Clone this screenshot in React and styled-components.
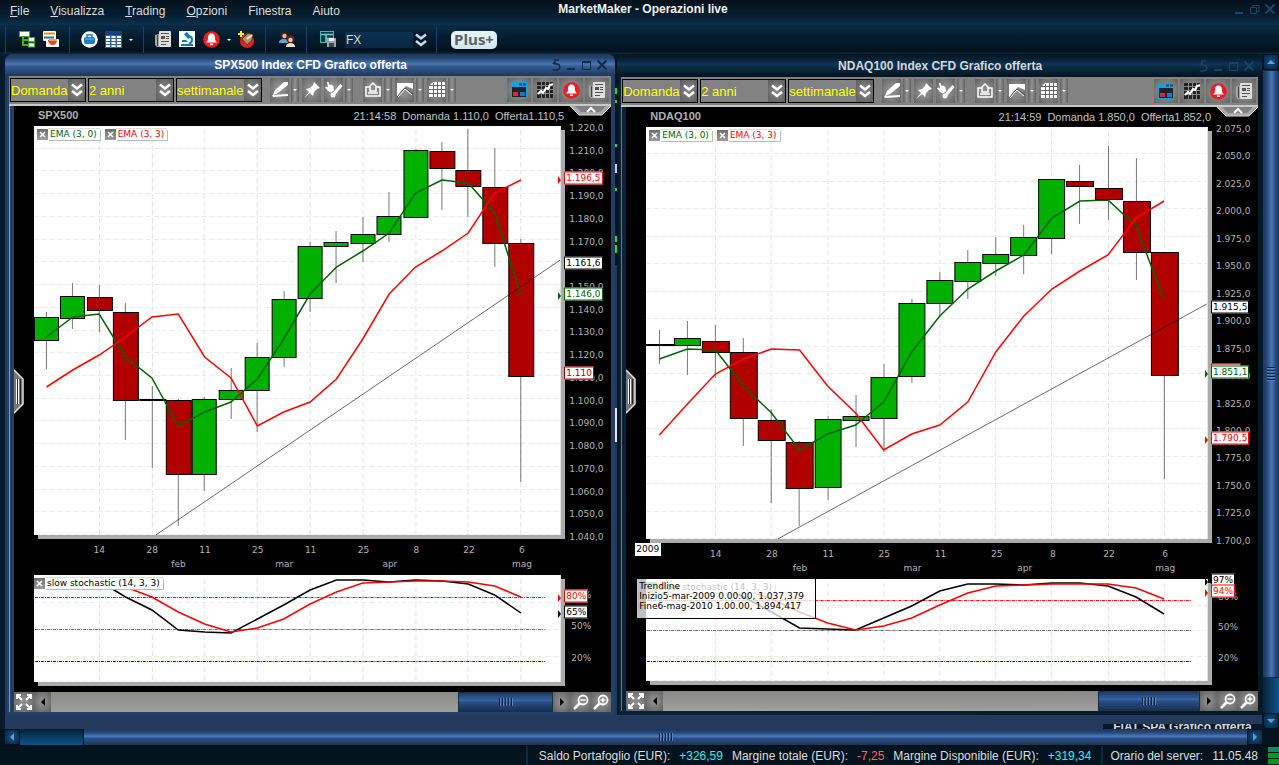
import React from "react";
import styled, { createGlobalStyle } from "styled-components";

const Colors = {
  night: "#04141f",
  desk: "#243a5c",
  gray: "#828282",
  axis: "#b4b4b4",
  green: "#00b000",
  darkGreen: "#006400",
  red: "#ff0000",
  darkRed: "#b00000",
};

const GlobalStyle = createGlobalStyle`
  * {
    box-sizing: border-box;
  }
  body {
    margin: 0;
    background: ${Colors.night};
    font-family: "Liberation Sans", Arial, sans-serif;
    font-size: 12px;
  }
  button {
    border: 0;
    padding: 0;
    background: none;
    font: inherit;
    color: inherit;
  }
  ul {
    list-style: none;
    margin: 0;
    padding: 0;
  }
  svg {
    display: block;
  }
`;

const Page = styled.div`
  min-height: 100vh;
  display: flex;
  flex-direction: column;
`;

/* ---------- application header ---------- */

const MenuBar = styled.header`
  height: 27px;
  flex: none;
  display: grid;
  grid-template-columns: 1fr auto 1fr;
  padding: 0 3px 0 10px;
  color: #dcdcdc;
  background: linear-gradient(#03111b, #061c2d 50%, #0b2f4c 92%, #08243a);
`;

const Menu = styled.nav`
  display: flex;
  align-items: flex-start;
  gap: 21px;
`;

const MenuItem = styled.button`
  line-height: 22px;

  &::first-letter {
    text-decoration: ${(p) => (p.$plain ? "none" : "underline")};
  }
`;

const AppTitle = styled.h1`
  margin: 0;
  font-size: 12px;
  line-height: 18px;
  color: #f0f0f0;
`;

const AppControls = styled.div`
  display: flex;
  justify-content: flex-end;
  align-items: flex-start;
  padding-top: 3px;
  gap: 4px;
  color: #1c4766;
`;

const MainToolbar = styled.div`
  height: 27px;
  flex: none;
  display: flex;
  align-items: center;
  padding: 0 5px 2px;
  background: linear-gradient(#0a2a44, #061d2f 35%, #03121d 90%, #0f2a45);
`;

const ToolSection = styled.div`
  height: 27px;
  display: flex;
  align-items: center;
  gap: 7px;
  padding: 0 ${(p) => p.$right || 10}px 0 ${(p) => p.$left || 11}px;
  border-left: 1px solid #12406a;
`;

const IconButton = styled.button`
  display: flex;
  width: 17px;
  height: 17px;
  align-items: center;
  justify-content: center;
`;

const Caret = styled.span`
  border: 2px solid transparent;
  border-top-color: #fff;
  border-bottom: 0;
`;

const LayoutSelect = styled.label`
  display: flex;
  align-items: center;
  gap: 2px;
  margin-left: 1px;
  background: #061a2b;
  color: #d8d8c8;

  select {
    appearance: none;
    border: 0;
    padding: 0 1px;
    width: 68px;
    height: 16px;
    font: 12px "Liberation Sans", Arial, sans-serif;
    color: inherit;
    background: linear-gradient(#0b3252, #082640);
  }
`;

const PlusButton = styled.button`
  width: 46px;
  height: 18px;
  border-radius: 5px;
  font: bold 15px/17px "Open Sans", "Noto Sans", sans-serif;
  color: #5c6164;
  background: linear-gradient(#e8f4f8, #cfe7ef);
`;

/* ---------- desktop ---------- */

const Desktop = styled.main`
  flex: 1;
  display: flex;
  padding-left: 5px;
  background: #071a2b;
`;

const DeskMain = styled.div`
  flex: 1;
  min-width: 0;
  display: flex;
  flex-direction: column;
  padding-right: 1px;
`;

const WindowRow = styled.div`
  flex: 1;
  display: flex;
`;

const Sliver = styled.div`
  width: 2px;
  flex: none;
  background: linear-gradient(
    #06141f 34px, #1fe01f 34px 40px, #06141f 40px 46px, #1fe01f 46px 49px,
    #06141f 49px 90px, #1fe01f 90px 93px, #06141f 93px 110px, #ccc 110px 119px,
    #06141f 119px 134px, #1fe01f 134px 137px, #06141f 137px 182px,
    #1fe01f 182px 188px, #06141f 188px 191px, #1fe01f 191px 199px,
    #06141f 199px 211px, #203858 211px 354px, #e6e6e6 354px 388px, #203858 388px
  );
`;

const DeskStrip = styled.div`
  height: 14px;
  flex: none;
  display: flex;
  justify-content: flex-end;
  align-items: flex-end;
  background: ${Colors.desk};
`;

const HiddenTitle = styled.div`
  width: 159px;
  height: 5px;
  overflow: hidden;
  text-align: center;
  font-weight: bold;
  line-height: 7px;
  color: #d6d6d6;
  background: #06182a;
`;

const frameTheme = {
  active: {
    title: "linear-gradient(#1b365a, #27476f 20%, #4a76b6 46%, #365c92 56%, #1d3658)",
    frame: "linear-gradient(90deg, #1c3456, #243f66 3px, #243f66)",
    line: "#8f98a6",
    control: "#122a4a",
  },
  idle: {
    title: "linear-gradient(#04141f, #07202f 20%, #0d3353 46%, #0a2840 60%, #04141f)",
    frame: "linear-gradient(90deg, #04121d, #0a2238 3px, #061826)",
    line: "#6f7780",
    control: "#164466",
  },
};

const Frame = styled.section`
  flex: ${(p) => p.$grow} 1 0;
  min-width: 0;
  display: flex;
  flex-direction: column;
  padding: 0 4px ${(p) => (p.$tone === "active" ? 3 : 4)}px;
  border-radius: 8px 8px 0 0;
  background: ${(p) => frameTheme[p.$tone].frame};
`;

const TitleBar = styled.div`
  height: ${(p) => (p.$tone === "active" ? 22 : 23)}px;
  margin: 0 -4px;
  padding: 0 7px 0 8px;
  flex: none;
  display: grid;
  grid-template-columns: 1fr auto 1fr;
  align-items: center;
  border-radius: 8px 8px 0 0;
  background: ${(p) => frameTheme[p.$tone].title};
  color: ${(p) => frameTheme[p.$tone].control};
`;

const WindowTitle = styled.h2`
  grid-column: 2;
  margin: 0;
  font-size: 12px;
  line-height: 22px;
  color: ${(p) => (p.$tone === "active" ? "#fff" : "#d2d8dc")};
`;

const WindowControls = styled.div`
  display: flex;
  justify-content: flex-end;
  gap: 4px;
`;

const ChartToolbar = styled.div`
  height: 30px;
  flex: none;
  display: flex;
  align-items: center;
  gap: 2px;
  padding: 0 2px 0 1px;
  border-bottom: 2px solid #c8c8c8;
  background: ${Colors.gray};
`;

const ComboBox = styled.label`
  position: relative;
  width: ${(p) => p.$width}px;
  height: 24px;
  flex: none;
  display: flex;
  border: 1px solid #000;

  select {
    appearance: none;
    width: 100%;
    border: 0;
    padding: 0;
    font: 13px "Liberation Sans", Arial, sans-serif;
    color: #ffff00;
    background: ${Colors.gray};
  }
`;

const ComboArrow = styled.span`
  position: absolute;
  top: 0;
  right: 0;
  bottom: 0;
  width: 17px;
  display: flex;
  align-items: center;
  justify-content: center;
  background: radial-gradient(#8a8a8a, #5c5c5c);
  pointer-events: none;
`;

const ToolGroup = styled.div`
  display: flex;
  gap: 3px;
  margin-left: ${(p) => p.$space}px;
`;

const ToolButton = styled.button`
  width: ${(p) => (p.$wide ? 24 : 19)}px;
  height: 24px;
  display: flex;
  align-items: center;
  justify-content: center;
  background: radial-gradient(#8c8c8c 30%, #626262);
`;

const ToolSplit = styled.div`
  display: flex;
  gap: 2px;
`;

const ToolDrop = styled.button`
  width: 8px;
  height: 24px;
  display: flex;
  align-items: center;
  justify-content: center;
  background: linear-gradient(90deg, #626262, #929292, #626262);
`;

const RightTools = styled.div`
  display: flex;
  gap: 2px;
  margin-left: auto;
`;

/* ---------- chart body ---------- */

const Body = styled.div`
  position: relative;
  flex: 1;
  display: flex;
  flex-direction: column;
  border-left: 1px solid ${(p) => frameTheme[p.$tone].line};
  padding-left: 4px;
`;

const ChartArea = styled.div`
  position: relative;
  flex: 1;
  display: flex;
  flex-direction: column;
  padding-bottom: 10px;
  background: #000;
`;

const QuoteLine = styled.div`
  height: 20px;
  flex: none;
  display: flex;
  gap: 6px;
  padding: 0 47px 0 24px;
  font-size: 11px;
  line-height: 21px;
  color: #c0c0c0;

  strong {
    margin-right: auto;
    line-height: 19px;
    color: #b0b0b0;
  }
`;

const CollapseTab = styled.button`
  position: absolute;
  top: 0;
  right: 0;
`;

const SideHandle = styled.button`
  position: absolute;
  left: 0;
  top: calc(50% - 30px);
`;

const ChartRow = styled.div`
  flex: ${(p) => p.$grow} 1 0;
  min-height: 60px;
  display: grid;
  grid-template-columns: 20px 1fr 50px;
`;

const Plot = styled.div`
  grid-column: 2;
  position: relative;
  background: #fff;
  border-right: 1px solid #e4e4e4;
  box-shadow: 4px 4px 0 #ababab;

  > svg {
    position: absolute;
    inset: 0;
    width: 100%;
    height: 100%;
  }
`;

const Axis = styled.div`
  position: relative;
  z-index: 1;
  font: 9px "DejaVu Sans", sans-serif;
  color: ${Colors.axis};
`;

const PriceScale = styled.ul`
  height: calc(100% + 2px);
  padding: 2px 0 0 8px;
  display: flex;
  flex-direction: column;
  justify-content: space-between;

  li {
    height: 0;
    line-height: 0;
  }
`;

const PercentMark = styled.span`
  position: absolute;
  left: 10px;
  line-height: 10px;
  transform: translateY(-50%);
`;

const Tag = styled.span`
  position: absolute;
  left: 3px;
  height: 13px;
  padding: 0 1px;
  border: 1px solid ${(p) => p.$color};
  background: #fff;
  line-height: 11px;
  color: ${(p) => p.$color};
  transform: translateY(-50%);
`;

const Pointer = styled.span`
  position: absolute;
  left: -3px;
  border: 4px solid transparent;
  border-left: 3px solid ${(p) => p.$color};
  border-right: 0;
  transform: translateY(-2px);
`;

const Legend = styled.div`
  position: absolute;
  top: 3px;
  left: ${(p) => p.$left}px;
  display: flex;
  gap: 5px;
  font: 9px/11px "DejaVu Sans", sans-serif;
`;

const LegendItem = styled.span`
  display: flex;
  color: ${(p) => p.$color};
`;

const LegendText = styled.span`
  height: 11px;
  padding: 0 3px 0 2px;
  background: #fff;
  box-shadow: 1px 1px 0 #bbb, 0 -1px 0 #ddd;
`;

const CloseBox = styled.button`
  width: 11px;
  height: 11px;
  background: linear-gradient(#6e6e6e, #9c9c9c);
`;

const DateScale = styled.div`
  position: relative;
  height: 40px;
  flex: none;
  margin: 0 50px 0 20px;
  font: 9px/10px "DejaVu Sans", sans-serif;
  color: ${Colors.axis};
`;

const DateMark = styled.span`
  position: absolute;
  top: ${(p) => (p.$month ? 24 : 10)}px;
  transform: translateX(-50%);
`;

const YearTag = styled.span`
  position: absolute;
  left: -11px;
  top: 4px;
  padding: 0 2px 0 1px;
  line-height: 13px;
  background: #fff;
  color: #000;
`;

const TrendNote = styled.div`
  position: absolute;
  left: -9px;
  top: 0;
  padding: 2px 11px 7px 2px;
  border: solid #000;
  border-width: 0 1px 1px 0;
  background: rgba(255, 255, 255, 0.75);
  color: #000;
  font: 9px/10px "DejaVu Sans", sans-serif;
  white-space: nowrap;
`;

const PanBar = styled.div`
  height: 20px;
  flex: none;
  display: flex;
  background: #767676;
`;

const PanButton = styled.button`
  width: ${(p) => p.$width}px;
  display: flex;
  align-items: center;
  justify-content: center;
  background: radial-gradient(#8c8c8c 20%, #5e5e5e);
`;

const PanTrack = styled.div`
  flex: 1;
  display: flex;
  justify-content: flex-end;
  background: linear-gradient(#888, #9f9f9b);
`;

const PanThumb = styled.div`
  width: 19%;
  display: flex;
  align-items: center;
  justify-content: center;
  border: 1px solid #16304f;
  background: linear-gradient(#1c3b66, #3763a4 42%, #2b5088 50%, #16304f);
`;

/* ---------- scroll bars and status ---------- */

const Grip = styled.span`
  width: ${(p) => (p.$vertical ? 8 : 14)}px;
  height: ${(p) => (p.$vertical ? 14 : 8)}px;
  background: repeating-linear-gradient(
    ${(p) => (p.$vertical ? "180deg" : "90deg")},
    #0e2340 0 1px,
    #5683c4 1px 2px,
    transparent 2px 3px
  );
`;

const VerticalScroll = styled.div`
  width: 16px;
  flex: none;
  display: flex;
  flex-direction: column;
  background: linear-gradient(90deg, #06213a, #105488);
`;

const VerticalThumb = styled.div`
  flex: 1;
  display: flex;
  align-items: center;
  justify-content: center;
  margin-bottom: 35px;
  border: solid #122a48;
  border-width: 1px 0;
  background: linear-gradient(90deg, #1c3558, #284b7c 25%, #4a78ba 55%, #2b4f82 75%, #1c3558);
`;

const ScrollArrow = styled.button`
  width: 16px;
  height: 16px;
  flex: none;
  display: flex;
  align-items: center;
  justify-content: center;
  border: 1px solid #051421;
  background: radial-gradient(#17507f, #07233c);
`;

const HorizontalScroll = styled.div`
  height: 17px;
  flex: none;
  display: flex;
  padding: 0 16px 0 4px;
  border-bottom: 1px solid #020c14;
  background: #04141f;
`;

const ScrollTrack = styled.div`
  flex: 1;
  display: flex;
  padding-left: 63px;
  background: linear-gradient(#052036, #0e5388);
`;

const HorizontalThumb = styled.div`
  flex: 1;
  display: flex;
  align-items: center;
  justify-content: center;
  border-left: 1px solid #051421;
  background: linear-gradient(#1c3558, #284b7c 25%, #4a78ba 45%, #2b4f82 60%, #1c3558);
`;

const StatusBar = styled.footer`
  height: 19px;
  flex: none;
  display: flex;
  justify-content: flex-end;
  line-height: 20px;
  color: #dcdcdc;
  background: #04141f;
`;

const StatusGroup = styled.div`
  display: flex;
  gap: 9px;
  padding: 0 ${(p) => p.$right}px 0 ${(p) => p.$left}px;
  border-left: 2px solid #0e2a42;
`;

const Amount = styled.span`
  color: ${(p) => (p.$loss ? "#ff6464" : "#28f0f0")};
`;

const SignalBars = styled.div`
  width: 11px;
  display: flex;
  flex-direction: column;
  gap: 1px;
  padding-top: 1px;

  span {
    height: 5px;
    background: #0a9a1a;
  }
  span:first-child {
    background: #0c8c5c;
  }
`;

/* ---------- data ---------- */

// each bar: direction, body top, body bottom, high, low
const spx = {
  title: "SPX500 Index CFD Grafico offerta",
  symbol: "SPX500",
  time: "21:14:58",
  bid: "Domanda 1.110,0",
  ask: "Offerta1.110,5",
  tone: "active",
  grow: 610,
  width: 527,
  height: 409,
  lower: 107,
  start: 12.5,
  step: 26.4,
  prices: [
    "1.220,0", "1.210,0", "1.200,0", "1.190,0", "1.180,0", "1.170,0", "1.160,0",
    "1.150,0", "1.140,0", "1.130,0", "1.120,0", "1.110,0", "1.100,0", "1.090,0",
    "1.080,0", "1.070,0", "1.060,0", "1.050,0", "1.040,0",
  ],
  bars: [
    ["up", 191, 214, 186, 243], ["up", 170, 192, 157, 203], ["down", 171, 184, 159, 206],
    ["down", 186, 274, 177, 314], ["flat", 274, 274, 260, 342], ["down", 274, 348, 273, 400],
    ["up", 273, 348, 271, 365], ["up", 264, 273, 242, 293], ["up", 231, 264, 217, 306],
    ["up", 173, 231, 165, 241], ["up", 120, 172, 116, 186], ["up", 116, 120, 105, 157],
    ["up", 108, 117, 91, 136], ["up", 90, 108, 66, 116], ["up", 24, 91, 23, 91],
    ["down", 25, 42, 16, 84], ["down", 44, 60, 3, 91], ["down", 61, 117, 22, 141],
    ["down", 117, 250, 113, 356],
  ],
  ema: [211, 191, 188, 231, 252, 300, 286, 276, 253, 213, 168, 141, 125, 107, 67, 54, 57, 87, 169],
  emaLead: [261, 244, 229],
  trend: [122, 409, 527, 134],
  tags: [
    { text: "1.196,5", y: 52, color: Colors.red, pointer: true },
    { text: "1.161,6", y: 137, color: "#000" },
    { text: "1.146,0", y: 168, color: Colors.darkGreen, pointer: true },
    { text: "1.110", y: 247, color: Colors.darkRed },
  ],
  levels: [22, 54, 86],
  fast: [6, 22, 35, 55, 57, 58, 44, 30, 15, 5, 5, 7, 5, 6, 9, 20, 38],
  slow: [6, 12, 22, 37, 49, 57, 53, 44, 29, 17, 8, 7, 6, 6, 7, 11, 22],
  percents: [["80%", 20], ["50%", 51], ["20%", 83]],
  lowerTags: [
    { text: "80%", y: 21, color: Colors.red, pointer: true },
    { text: "65%", y: 37, color: "#000", pointer: true },
  ],
};

const ndaq = {
  title: "NDAQ100 Index CFD Grafico offerta",
  symbol: "NDAQ100",
  time: "21:14:59",
  bid: "Domanda 1.850,0",
  ask: "Offerta1.852,0",
  tone: "idle",
  grow: 645,
  width: 562,
  height: 412,
  lower: 102,
  start: 13.4,
  step: 28.1,
  prices: [
    "2.075,0", "2.050,0", "2.025,0", "2.000,0", "1.975,0", "1.950,0", "1.925,0",
    "1.900,0", "1.875,0", "1.850,0", "1.825,0", "1.800,0", "1.775,0", "1.750,0",
    "1.725,0", "1.700,0",
  ],
  bars: [
    ["flat", 218, 218, 203, 237], ["up", 211, 218, 194, 248], ["down", 214, 225, 198, 251],
    ["down", 225, 291, 211, 319], ["down", 293, 313, 282, 376], ["down", 315, 361, 314, 399],
    ["up", 292, 360, 289, 373], ["up", 289, 293, 268, 320], ["up", 250, 291, 237, 325],
    ["up", 176, 249, 172, 256], ["up", 153, 176, 145, 190], ["up", 135, 154, 123, 172],
    ["up", 127, 136, 110, 149], ["up", 110, 128, 98, 147], ["up", 52, 111, 52, 127],
    ["down", 54, 59, 38, 97], ["down", 61, 72, 19, 93], ["down", 74, 125, 31, 153],
    ["down", 125, 248, 125, 352],
  ],
  ema: [232, 222, 223, 259, 286, 323, 307, 298, 275, 225, 189, 162, 144, 128, 91, 74, 73, 99, 173],
  emaLead: [308, 277, 247],
  trend: [132, 412, 562, 177],
  tags: [
    { text: "1.915,5", y: 180, color: "#000" },
    { text: "1.850", y: 243, color: Colors.darkRed },
    { text: "1.851,1", y: 245, color: Colors.darkGreen, pointer: true },
    { text: "1.790,5", y: 311, color: Colors.red, pointer: true },
  ],
  levels: [21, 51, 82],
  fast: [4, 18, 33, 49, 50, 51, 39, 27, 12, 5, 5, 6, 4, 4, 7, 18, 35],
  slow: [4, 10, 20, 33, 44, 51, 47, 39, 26, 14, 7, 6, 5, 5, 5, 9, 20],
  percents: [["80%", 18], ["50%", 48], ["20%", 79]],
  lowerTags: [
    { text: "97%", y: 1, color: "#000", pointer: true },
    { text: "94%", y: 12, color: Colors.red, pointer: true },
  ],
  year: "2009",
  note: [
    "Trendline",
    "Inizio5-mar-2009 0.00.00, 1.037,379",
    "Fine6-mag-2010 1.00.00, 1.894,417",
  ],
};

const days = [[2, "14"], [4, "28"], [6, "11"], [8, "25"], [10, "11"], [12, "25"], [14, "8"], [16, "22"], [18, "6"]];
const months = [[5, "feb"], [9, "mar"], [13, "apr"], [18, "mag"]];

/* ---------- icons ---------- */

const TreeIcon = () => (
  <svg width="17" height="17" viewBox="0 0 17 17">
    <path d="M4 5v9h6M4 9h6" fill="none" stroke="#3fae2a" strokeWidth="2" />
    <rect x="0.500" y="0.500" width="10" height="5" fill="#fff" stroke="#3fae2a" />
    <rect x="9.500" y="6.500" width="6" height="4" fill="#fff" stroke="#3fae2a" />
    <rect x="9.500" y="12" width="6" height="4" fill="#fff" stroke="#3fae2a" />
  </svg>
);

const CardsIcon = () => (
  <svg width="17" height="17" viewBox="0 0 17 17">
    <rect width="13" height="10" rx="1" fill="#fff" />
    <path d="M1 2.500h11" stroke="#f39200" strokeWidth="2" />
    <path d="M1 6.500h10" stroke="#1b75bb" strokeWidth="2" />
    <rect x="3" y="8" width="13" height="8" rx="1" fill="#fff" />
    <path d="M5 9h9c0 3-2 5-4 5s-5-2-5-5z" fill="#e8412c" />
    <path d="M6 8h8v2H6z" fill="#f5a623" />
  </svg>
);

const BagIcon = () => (
  <svg width="17" height="17" viewBox="0 0 17 17">
    <circle cx="8.500" cy="8.500" r="8.300" fill="#fff" />
    <path d="M6 6V4h5v2" fill="none" stroke="#0c86c8" strokeWidth="1.500" />
    <rect x="3" y="6" width="11" height="7" rx="2" fill="#0c86c8" />
    <path d="M4.500 8h8" stroke="#6fc0e8" />
  </svg>
);

const CalendarIcon = () => (
  <svg width="17" height="17" viewBox="0 0 17 17">
    <rect width="17" height="17" fill="#2c62b0" />
    <rect y="0" width="17" height="4" fill="#153f86" />
    <path
      d="M1 6h4M6.500 6h4M12 6h4M1 9h4M6.500 9h4M12 9h4M1 12h4M6.500 12h4M12 12h4M1 15h4M6.500 15h4M12 15h4"
      stroke="#fff"
      strokeWidth="2"
    />
  </svg>
);

const NewsIcon = () => (
  <svg width="17" height="17" viewBox="0 0 17 17">
    <path d="M0 4l4-1v13H2L0 14z" fill="#a4a4a4" />
    <rect x="4" y="0" width="12" height="16" rx="1" fill="#dedede" />
    <path d="M6 2.500h8M11 5.500h3M11 7.500h3M6 10.500h8M6 13.500h5" stroke="#555" />
    <rect x="6" y="5" width="4" height="3" fill="#555" />
    <path d="M2.500 4v11" stroke="#444" />
  </svg>
);

const MicroscopeIcon = () => (
  <svg width="17" height="17" viewBox="0 0 17 17">
    <rect width="16" height="16" fill="#fff" />
    <path d="M5 3l3-2 4 5-3 2zM7 9H3v2h6zM2 13h12v2H2z" fill="#0c79bd" />
    <path d="M10 5c4 1 4 6 0 8" fill="none" stroke="#0c79bd" strokeWidth="2" />
  </svg>
);

const BellIcon = () => (
  <svg width="17" height="17" viewBox="0 0 17 17">
    <circle cx="8.500" cy="8.500" r="8.300" fill="#ee1c24" />
    <path d="M8.500 2.500c-3 0-3.500 2.500-3.500 5 0 2-1 3-2 4h11c-1-1-2-2-2-4 0-2.500-.5-5-3.500-5zM7 12.500h3v1.500H7z" fill="#fff" />
  </svg>
);

const AlertTagIcon = () => (
  <svg width="17" height="17" viewBox="0 0 17 17">
    <circle cx="9" cy="10" r="7" fill="#e0202a" />
    <path d="M4 8l6-6 5 2-1 5-5 5z" fill="#b98a62" stroke="#5c3a20" />
    <path d="M9 8l5-4" stroke="#f4e2cc" strokeWidth="2" />
    <path d="M3 0v6M0 3h6" stroke="#ffee00" strokeWidth="2" />
  </svg>
);

const PeopleIcon = () => (
  <svg width="17" height="17" viewBox="0 0 17 17">
    <circle cx="5" cy="4" r="3.500" fill="#3a2418" />
    <circle cx="5.500" cy="5" r="2.200" fill="#e9b890" />
    <path d="M0 12c0-3 2-4 5-4s4 1 4 4z" fill="#5ea4dc" />
    <circle cx="11.500" cy="8" r="3.800" fill="#6a1f12" />
    <circle cx="11.500" cy="9" r="2.200" fill="#f2c8a4" />
    <path d="M7 16c0-3 2-4 4.500-4s4.500 1 4.500 4z" fill="#f6e0d0" />
  </svg>
);

const SaveLayoutIcon = () => (
  <svg width="17" height="17" viewBox="0 0 17 17">
    <rect x="0.500" y="0.500" width="13" height="11" fill="#0b3a44" stroke="#3fb6bc" />
    <path d="M1 3.500h12M6 4v7M6 7.500h7" stroke="#6fd0d4" strokeWidth="1.500" />
    <rect x="7" y="7" width="9" height="9" fill="#9da3a8" />
    <path d="M9 7h5v3H9z" fill="#eee" />
    <path d="M9 12h5v4H9z" fill="#444" />
  </svg>
);

const DoubleChevron = ({ color = "#fff" }) => (
  <svg width="12" height="14" viewBox="0 0 12 14">
    <path d="M1 1.500l5 4 5-4M1 8l5 4 5-4" fill="none" stroke={color} strokeWidth="2.500" />
  </svg>
);

const MinimizeIcon = () => (
  <svg width="11" height="12" viewBox="0 0 11 12">
    <path d="M1 10h8" stroke="currentColor" strokeWidth="2" />
  </svg>
);

const MaximizeIcon = () => (
  <svg width="11" height="12" viewBox="0 0 11 12">
    <path d="M1.500 2.500h8v8h-8z" fill="none" stroke="currentColor" />
    <path d="M1 3h9" stroke="currentColor" strokeWidth="2" />
  </svg>
);

const RestoreIcon = () => (
  <svg width="11" height="12" viewBox="0 0 11 12">
    <path d="M1.500 4.500h6v6h-6zM4 2.500h6v6H8M4 2v2" fill="none" stroke="currentColor" />
  </svg>
);

const CloseIcon = () => (
  <svg width="12" height="12" viewBox="0 0 12 12">
    <path d="M1.500 1.500l9 9M10.500 1.500l-9 9" stroke="currentColor" strokeWidth="2" />
  </svg>
);

const DetachIcon = () => (
  <svg width="10" height="12" viewBox="0 0 10 12">
    <path d="M7 1H3v4h2c4 0 4 6-1 6H1M1 5l2-3" fill="none" stroke="currentColor" strokeWidth="1.500" />
  </svg>
);

const PenIcon = () => (
  <svg width="18" height="18" viewBox="0 0 18 18">
    <path d="M13 1h4v3L7 12l-5 2 2-5zM1 14l16-1v2l-15 1z" fill="#fff" />
  </svg>
);

const PinIcon = () => (
  <svg width="18" height="18" viewBox="0 0 18 18">
    <path d="M11 1l6 6-3 1-3 3-1 4-3-3-6 5 5-6-3-3 4-1 3-3z" fill="#fff" />
  </svg>
);

const HandIcon = () => (
  <svg width="19" height="18" viewBox="0 0 19 18">
    <path d="M3 1l1.500 0 1 3 2-.5 2 2 .5 4-3 2-3-1.500L1 6.500l1-1 2 1z" fill="#fff" />
    <path d="M17.500 4L9 14" fill="none" stroke="#fff" strokeWidth="3" />
    <circle cx="9" cy="14" r="2.500" fill="#fff" />
  </svg>
);

const ClipIcon = () => (
  <svg width="18" height="18" viewBox="0 0 18 18">
    <path d="M6 6H2v9h14V6h-4" fill="none" stroke="#fff" strokeWidth="1.500" />
    <path d="M6 10V5l3-3 3 3v5z" fill="none" stroke="#fff" strokeWidth="1.500" />
    <path d="M4 12h10" stroke="#fff" strokeWidth="1.500" />
  </svg>
);

const PeakIcon = () => (
  <svg width="18" height="18" viewBox="0 0 18 18">
    <path d="M1 2h16v6l-7-3L5 10l-4 6z" fill="#fff" />
    <path d="M1 16l8-9 8 6" fill="none" stroke="#444" />
    <path d="M2 16l7-8 7 6" fill="none" stroke="#fff" />
  </svg>
);

const GridIcon = () => (
  <svg width="18" height="18" viewBox="0 0 18 18">
    <path d="M5 1h12v15H1V5z" fill="#fff" />
    <path d="M1 4.500h16M1 8.500h16M1 12.500h16M5.500 2v14M9.500 1v15M13.500 1v15" stroke="#666" />
  </svg>
);

const DealIcon = () => (
  <svg width="18" height="18" viewBox="0 0 18 18">
    <rect x="1" y="1" width="16" height="16" fill="#16a0dc" />
    <rect x="2" y="6" width="14" height="10" fill="#222" />
    <path d="M9 3.500h3M13 3.500h3" stroke="#0b4a78" strokeWidth="2" />
    <rect x="3" y="11" width="5" height="4" fill="#e02828" />
    <rect x="10" y="11" width="5" height="4" fill="#1a78c0" />
  </svg>
);

const TrendIcon = () => (
  <svg width="18" height="18" viewBox="0 0 18 18">
    <rect x="1" y="1" width="16" height="16" fill="#222" />
    <path d="M1 4.500h16M1 8.500h16M1 12.500h16M5.500 1v16M9.500 1v16M13.500 1v16" stroke="#888" />
    <path d="M2 13l3-3 2 2 3-5 2 1 2-4 3-1" fill="none" stroke="#fff" strokeWidth="2" />
  </svg>
);

const ExpandIcon = () => (
  <svg width="16" height="16" viewBox="0 0 16 16">
    <path
      d="M1 5V1h4M11 1h4v4M15 11v4h-4M5 15H1v-4M1 1l5 5M15 1l-5 5M15 15l-5-5M1 15l5-5"
      fill="none"
      stroke="#fff"
      strokeWidth="2"
    />
  </svg>
);

const ZoomIcon = ({ plus }) => (
  <svg width="16" height="16" viewBox="0 0 16 16">
    <circle cx="10" cy="6" r="4.500" fill="none" stroke="#fff" strokeWidth="1.800" />
    <path d="M7 9l-6 6" stroke="#fff" strokeWidth="2.500" />
    <path d={plus ? "M7.500 6h5M10 3.500v5" : "M7.500 6h5"} stroke="#fff" strokeWidth="1.500" />
  </svg>
);

const Arrow = ({ d, color = "#5c9ce0" }) => (
  <svg width="8" height="8" viewBox="0 0 8 8">
    <path d={d} fill={color} />
  </svg>
);

const arrows = {
  left: "M6 0v8L2 4z",
  right: "M2 0v8l4-4z",
  up: "M0 6h8L4 2z",
  down: "M0 2h8L4 6z",
};

/* ---------- charts ---------- */

const GridLines = ({ chart, rows, height }) => (
  <g stroke="#e2e2e2" strokeDasharray="5 3">
    {rows.map((y) => (
      <path key={y} d={`M0 ${Math.floor(y) + 0.5}H${chart.width}`} stroke="#ececec" />
    ))}
    {days.map(([i]) => (
      <path key={i} d={`M${Math.floor(chart.start + i * chart.step) + 0.5} 4V${height}`} />
    ))}
  </g>
);

const line = (chart, values, from = 0) =>
  values.map((y, i) => `${chart.start + (i + from) * chart.step},${y}`).join(" ");

const CandleChart = ({ chart }) => {
  const { width, height, bars, ema, emaLead, trend, prices } = chart;
  const rows = prices.slice(1).map((_, i) => ((i + 1) * height) / (prices.length - 1) - 0.5);
  const lagged = [...emaLead, ...ema.slice(0, -3)];
  return (
    <svg viewBox={`0 0 ${width} ${height}`} preserveAspectRatio="none">
      <GridLines chart={chart} rows={rows} height={height} />
      {bars.map(([kind, top, bottom, high, low], i) => {
        const x = Math.floor(chart.start + i * chart.step) + 0.5;
        const half = Math.floor(chart.step / 2) - 1;
        return (
          <g key={i}>
            <path d={`M${x} ${high}V${low}`} stroke="#777" />
            {kind === "flat" ? (
              <path d={`M${x - half - 1} ${top}h${2 * half + 3}`} stroke="#000" strokeWidth="2" />
            ) : (
              <rect
                x={x - half}
                y={top + 0.5}
                width={half * 2 + (kind === "up" ? 0 : 1)}
                height={bottom - top}
                fill={kind === "up" ? Colors.green : Colors.darkRed}
                stroke="#000"
              />
            )}
          </g>
        );
      })}
      <path d={`M${trend[0]} ${trend[1]}L${trend[2]} ${trend[3]}`} stroke="#000" strokeOpacity="0.65" strokeWidth="0.900" />
      <polyline points={line(chart, ema)} fill="none" stroke={Colors.darkGreen} strokeWidth="1.500" />
      <polyline points={line(chart, lagged)} fill="none" stroke={Colors.red} strokeWidth="1.500" />
    </svg>
  );
};

const StochasticChart = ({ chart }) => {
  const { width, lower, levels, fast, slow } = chart;
  const end = width - 15;
  return (
    <svg viewBox={`0 0 ${width} ${lower}`} preserveAspectRatio="none">
      <GridLines chart={chart} rows={[levels[0] + 5, levels[1], levels[2] - 5, lower - 1]} height={lower} />
      {levels.map((y, i) => (
        <path
          key={y}
          d={`M1 ${y + 0.5}H${end}`}
          stroke={["#ff0000", "#666", "#0000ff"][i]}
          strokeDasharray="3 1 1 1"
        />
      ))}
      <polyline points={line(chart, fast, 2)} fill="none" stroke="#000" strokeWidth="1.500" />
      <polyline points={line(chart, slow, 2)} fill="none" stroke={Colors.red} strokeWidth="1.500" />
    </svg>
  );
};

const Tags = ({ tags, height }) =>
  tags.map((tag) => {
    const top = `${(tag.y / height) * 100}%`;
    return (
      <React.Fragment key={tag.text}>
        {tag.pointer && <Pointer $color={tag.color} style={{ top }} />}
        <Tag $color={tag.color} style={{ top }}>
          {tag.text}
        </Tag>
      </React.Fragment>
    );
  });

const LegendEntry = ({ color, text }) => (
  <LegendItem $color={color}>
    <CloseBox aria-label={`Rimuovi ${text}`}>
      <svg width="11" height="11" viewBox="0 0 11 11">
        <path d="M3 3l5 5M8 3l-5 5" stroke="#fff" strokeWidth="1.500" />
      </svg>
    </CloseBox>
    <LegendText>{text}</LegendText>
  </LegendItem>
);

const Combo = ({ label, value, width }) => (
  <ComboBox $width={width}>
    <select aria-label={label} defaultValue={value}>
      <option>{value}</option>
    </select>
    <ComboArrow>
      <DoubleChevron />
    </ComboArrow>
  </ComboBox>
);

const Split = ({ label, children }) => (
  <ToolSplit>
    <ToolButton aria-label={label}>{children}</ToolButton>
    <ToolDrop aria-label={`${label}, altre opzioni`}>
      <Caret />
    </ToolDrop>
  </ToolSplit>
);

const ChartWindow = ({ chart }) => {
  const at = (i) => ({ left: `${((chart.start + i * chart.step) / chart.width) * 100}%` });
  return (
    <Frame $grow={chart.grow} $tone={chart.tone}>
      <TitleBar $tone={chart.tone}>
        <span />
        <WindowTitle $tone={chart.tone}>{chart.title}</WindowTitle>
        <WindowControls>
          <button aria-label="Sgancia"><DetachIcon /></button>
          <button aria-label="Riduci"><MinimizeIcon /></button>
          <button aria-label="Ingrandisci"><MaximizeIcon /></button>
          <button aria-label="Chiudi"><CloseIcon /></button>
        </WindowControls>
      </TitleBar>
      <ChartToolbar>
        <Combo label="Prezzo" value="Domanda" width={76} />
        <Combo label="Periodo" value="2 anni" width={86} />
        <Combo label="Intervallo" value="settimanale" width={86} />
        <ToolGroup $space={6}>
          <Split label="Disegna"><PenIcon /></Split>
          <ToolButton aria-label="Fissa"><PinIcon /></ToolButton>
          <Split label="Strumenti"><HandIcon /></Split>
        </ToolGroup>
        <ToolGroup $space={8}>
          <Split label="Modelli"><ClipIcon /></Split>
          <Split label="Tipo grafico"><PeakIcon /></Split>
          <Split label="Griglia"><GridIcon /></Split>
        </ToolGroup>
        <RightTools>
          <ToolButton $wide aria-label="Ordine"><DealIcon /></ToolButton>
          <ToolButton $wide aria-label="Grafico"><TrendIcon /></ToolButton>
          <ToolButton $wide aria-label="Avviso"><BellIcon /></ToolButton>
          <ToolButton $wide aria-label="Notizie"><NewsIcon /></ToolButton>
        </RightTools>
      </ChartToolbar>
      <Body $tone={chart.tone}>
        <ChartArea>
          <QuoteLine>
            <strong>{chart.symbol}</strong>
            <span>{chart.time}</span>
            <span>{chart.bid}</span>
            <span>{chart.ask}</span>
          </QuoteLine>
          <CollapseTab aria-label="Comprimi">
            <svg width="41" height="10" viewBox="0 0 41 10">
              <path d="M0 0h41l-9 9H9z" fill="#a8a8a8" />
              <path d="M5 0h31l-6 6H11z" fill="#808080" />
              <path d="M0 0l9 9h23l9-9" fill="none" stroke="#ddd" />
              <path d="M17 6l4-4 4 4" fill="none" stroke="#fff" strokeWidth="2" />
            </svg>
          </CollapseTab>
          <ChartRow $grow={chart.height}>
            <Plot>
              <CandleChart chart={chart} />
              <Legend $left={3}>
                <LegendEntry color={Colors.darkGreen} text="EMA (3, 0)" />
                <LegendEntry color={Colors.red} text="EMA (3, 3)" />
              </Legend>
            </Plot>
            <Axis>
              <PriceScale>
                {chart.prices.map((price) => (
                  <li key={price}>{price}</li>
                ))}
              </PriceScale>
              <Tags tags={chart.tags} height={chart.height} />
            </Axis>
          </ChartRow>
          <DateScale>
            {days.map(([i, text]) => (
              <DateMark key={i} style={at(i)}>{text}</DateMark>
            ))}
            {months.map(([i, text]) => (
              <DateMark key={text} $month style={at(i)}>{text}</DateMark>
            ))}
            {chart.year && <YearTag>{chart.year}</YearTag>}
          </DateScale>
          <ChartRow $grow={chart.lower}>
            <Plot>
              <StochasticChart chart={chart} />
              <Legend $left={0}>
                <LegendEntry color="#000" text="slow stochastic (14, 3, 3)" />
              </Legend>
              {chart.note && (
                <TrendNote>
                  {chart.note.map((text) => (
                    <div key={text}>{text}</div>
                  ))}
                </TrendNote>
              )}
            </Plot>
            <Axis>
              {chart.percents.map(([text, y]) => (
                <PercentMark key={text} style={{ top: `${(y / chart.lower) * 100}%` }}>
                  {text}
                </PercentMark>
              ))}
              <Tags tags={chart.lowerTags} height={chart.lower} />
            </Axis>
          </ChartRow>
          <SideHandle aria-label="Mostra pannello">
            <svg width="11" height="45" viewBox="0 0 11 45">
              <path d="M0 0l9 10v25l-9 10z" fill="#777" />
              <path d="M0 1l9 9v25l-9 9" fill="none" stroke="#e0e0e0" strokeWidth="1.500" />
              <path d="M2.500 10v25M4.500 10v25" stroke="#fff" />
              <path d="M3.500 10v25M6.500 10v25" stroke="#222" />
            </svg>
          </SideHandle>
        </ChartArea>
        <PanBar>
          <PanButton $width={20} aria-label="Schermo intero"><ExpandIcon /></PanButton>
          <PanButton $width={17} aria-label="Indietro"><Arrow d={arrows.left} color="#000" /></PanButton>
          <PanTrack>
            <PanThumb>
              <Grip />
            </PanThumb>
          </PanTrack>
          <PanButton $width={17} aria-label="Avanti"><Arrow d={arrows.right} color="#000" /></PanButton>
          <PanButton $width={21} aria-label="Riduci zoom"><ZoomIcon /></PanButton>
          <PanButton $width={20} aria-label="Aumenta zoom"><ZoomIcon plus /></PanButton>
        </PanBar>
      </Body>
    </Frame>
  );
};

const App = () => {
  return (
    <Page>
      <GlobalStyle />
      <MenuBar>
        <Menu>
          <MenuItem>File</MenuItem>
          <MenuItem>Visualizza</MenuItem>
          <MenuItem>Trading</MenuItem>
          <MenuItem>Opzioni</MenuItem>
          <MenuItem $plain>Finestra</MenuItem>
          <MenuItem $plain>Aiuto</MenuItem>
        </Menu>
        <AppTitle>MarketMaker - Operazioni live</AppTitle>
        <AppControls>
          <button aria-label="Riduci"><MinimizeIcon /></button>
          <button aria-label="Ripristina"><RestoreIcon /></button>
          <button aria-label="Chiudi"><CloseIcon /></button>
        </AppControls>
      </MenuBar>

      <MainToolbar>
        <ToolSection $left={13} $right={9}>
          <IconButton aria-label="Prodotti"><TreeIcon /></IconButton>
          <IconButton aria-label="Schede"><CardsIcon /></IconButton>
        </ToolSection>
        <ToolSection>
          <IconButton aria-label="Portafoglio"><BagIcon /></IconButton>
          <IconButton aria-label="Calendario"><CalendarIcon /></IconButton>
          <Caret />
        </ToolSection>
        <ToolSection>
          <IconButton aria-label="Notizie"><NewsIcon /></IconButton>
          <IconButton aria-label="Analisi"><MicroscopeIcon /></IconButton>
          <IconButton aria-label="Avvisi"><BellIcon /></IconButton>
          <Caret />
          <IconButton aria-label="Nuovo avviso"><AlertTagIcon /></IconButton>
        </ToolSection>
        <ToolSection $left={13}>
          <IconButton aria-label="Assistenza"><PeopleIcon /></IconButton>
        </ToolSection>
        <ToolSection $left={13} $right={9}>
          <IconButton aria-label="Salva layout"><SaveLayoutIcon /></IconButton>
          <LayoutSelect>
            <select aria-label="Layout" defaultValue="FX">
              <option>FX</option>
            </select>
            <DoubleChevron color="#c4dcf0" />
          </LayoutSelect>
        </ToolSection>
        <ToolSection $left={14}>
          <PlusButton>Plus+</PlusButton>
        </ToolSection>
      </MainToolbar>

      <Desktop>
        <DeskMain>
          <WindowRow>
            <ChartWindow chart={spx} />
            <Sliver />
            <ChartWindow chart={ndaq} />
          </WindowRow>
          <DeskStrip>
            <HiddenTitle>FIAT SPA Grafico offerta</HiddenTitle>
          </DeskStrip>
        </DeskMain>
        <VerticalScroll>
          <ScrollArrow aria-label="Su"><Arrow d={arrows.up} /></ScrollArrow>
          <VerticalThumb>
            <Grip $vertical />
          </VerticalThumb>
          <ScrollArrow aria-label="Giù"><Arrow d={arrows.down} /></ScrollArrow>
        </VerticalScroll>
      </Desktop>

      <HorizontalScroll>
        <ScrollArrow aria-label="Sinistra"><Arrow d={arrows.left} /></ScrollArrow>
        <ScrollTrack>
          <HorizontalThumb>
            <Grip />
          </HorizontalThumb>
        </ScrollTrack>
        <ScrollArrow aria-label="Destra"><Arrow d={arrows.right} /></ScrollArrow>
      </HorizontalScroll>

      <StatusBar>
        <StatusGroup $left={11} $right={10}>
          <span>Saldo Portafoglio (EUR):</span>
          <Amount>+326,59</Amount>
          <span>Margine totale (EUR):</span>
          <Amount $loss>-7,25</Amount>
          <span>Margine Disponibile (EUR):</span>
          <Amount>+319,34</Amount>
        </StatusGroup>
        <StatusGroup $left={7} $right={10}>
          <span>Orario del server:</span>
          <span>11.05.48</span>
        </StatusGroup>
        <SignalBars>
          <span />
          <span />
          <span />
        </SignalBars>
      </StatusBar>
    </Page>
  );
};

export default App;
